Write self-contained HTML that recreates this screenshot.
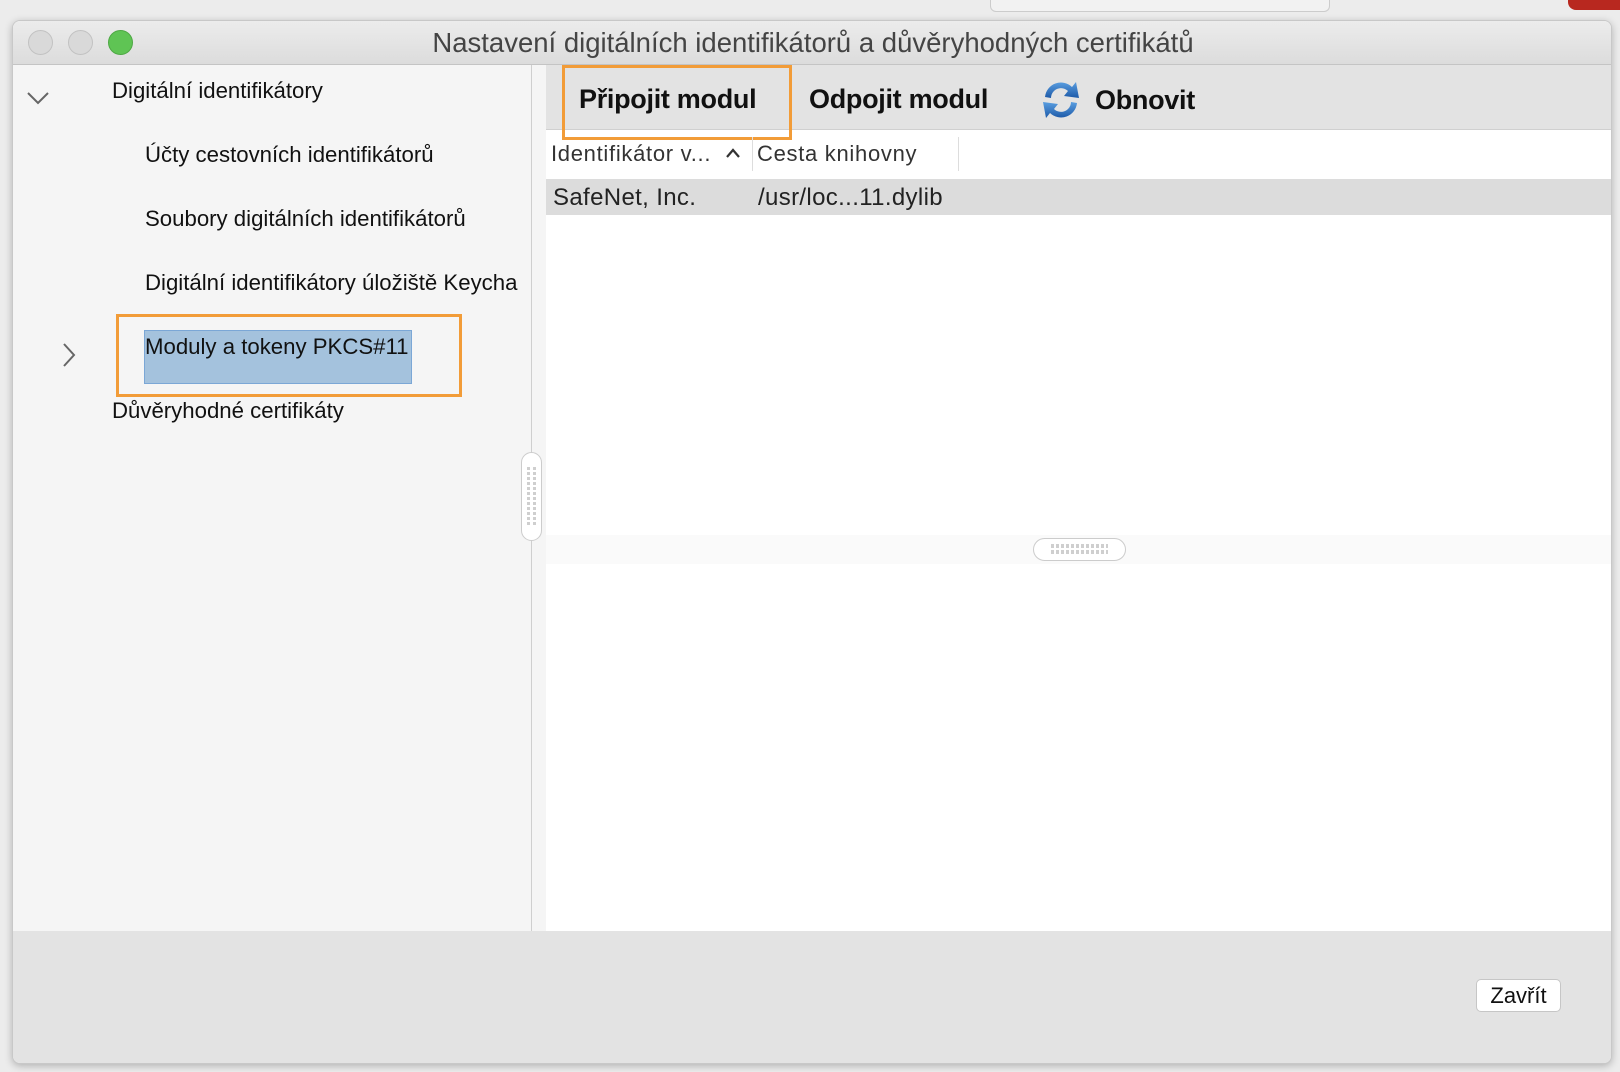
<!DOCTYPE html>
<html><head><meta charset="utf-8"><style>
*{margin:0;padding:0;box-sizing:border-box}
body{width:1620px;height:1072px;background:#ececec;position:relative;overflow:hidden;font-family:"Liberation Sans",sans-serif;color:#111}
.a{position:absolute}
.win{left:12px;top:20px;width:1600px;height:1044px;background:#f5f5f5;border:1px solid #c8c8c8;border-radius:8px;overflow:hidden;box-shadow:0 2px 8px rgba(0,0,0,.25)}
.tb{left:0;top:0;width:1600px;height:44px;background:linear-gradient(#ececec,#dcdcdc);border-bottom:1px solid #c4c4c4}
.dot{width:25px;height:25px;border-radius:50%;background:#d9d9d9;border:1px solid #c2c2c2;top:9px}
.t{font-size:27.5px;color:#444;white-space:nowrap}
.s{font-size:22.2px;white-space:nowrap}
.b{font-size:27px;font-weight:bold;white-space:nowrap;letter-spacing:-0.3px}
.h{font-size:22px;color:#333;letter-spacing:0.7px;white-space:nowrap}
.r{font-size:24px;color:#222;letter-spacing:0.35px;white-space:nowrap}
</style></head><body>
<div class="a" style="left:990px;top:0;width:340px;height:12px;border:1px solid #ccc;border-top:0;border-radius:0 0 6px 6px;background:#f2f2f2"></div>
<div class="a" style="left:1568px;top:0;width:52px;height:10px;background:#b8281f;border-radius:0 0 0 8px"></div>
<div class="a win">
 <div class="a tb">
  <div class="a dot" style="left:15px"></div>
  <div class="a dot" style="left:55px"></div>
  <div class="a dot" style="left:95px;background:#5fc454;border-color:#4ea844"></div>
  <div class="a t" style="left:0;width:1600px;text-align:center;top:6px">Nastavení digitálních identifikátorů a důvěryhodných certifikátů</div>
 </div>
 <div class="a" style="left:0;top:44px;width:519px;height:866px;background:#f5f5f5;border-right:1px solid #cfcfcf"></div>
 <svg class="a" style="left:12px;top:68px" width="26" height="18"><path d="M3 4 L13 14 L23 4" fill="none" stroke="#666" stroke-width="2"/></svg>
 <div class="a s" style="left:99px;top:57px">Digitální identifikátory</div>
 <div class="a s" style="left:132px;top:121px">Účty cestovních identifikátorů</div>
 <div class="a s" style="left:132px;top:185px">Soubory digitálních identifikátorů</div>
 <div class="a s" style="left:132px;top:249px">Digitální identifikátory úložiště Keycha</div>
 <div class="a" style="left:103px;top:293px;width:346px;height:83px;border:3px solid #f29c38"></div>
 <div class="a" style="left:131px;top:309px;width:268px;height:54px;background:#a4c2dd;border:1px solid #7ba7d6"></div>
 <div class="a s" style="left:132px;top:313px">Moduly a tokeny PKCS#11</div>
 <svg class="a" style="left:48px;top:320px" width="16" height="28"><path d="M3 3 L13 14 L3 25" fill="none" stroke="#666" stroke-width="2"/></svg>
 <div class="a s" style="left:99px;top:377px">Důvěryhodné certifikáty</div>
 <div class="a" style="left:508px;top:431px;width:21px;height:89px;border:1.5px solid #ccc;border-radius:11px;background:#fff"></div>
 <div class="a" style="left:514px;top:446px;width:9px;height:58px;background:repeating-linear-gradient(#cfcfcf 0 3px,transparent 3px 5px);-webkit-mask:repeating-linear-gradient(90deg,#000 0 3px,transparent 3px 6px)"></div>
 <div class="a" style="left:533px;top:44px;width:1067px;height:866px;background:#fff"></div>
 <div class="a" style="left:533px;top:44px;width:1067px;height:65px;background:#e3e3e3;border-bottom:1px solid #d0d0d0"></div>
 <div class="a" style="left:549px;top:44px;width:230px;height:75px;border:3px solid #f29c38"></div>
 <div class="a b" style="left:566px;top:63px">Připojit modul</div>
 <div class="a b" style="left:796px;top:63px">Odpojit modul</div>
 <svg class="a" style="left:1026px;top:56px" width="44" height="46" viewBox="0 0 44 46">
  <defs><linearGradient id="g" x1="0" y1="0" x2="0" y2="1"><stop offset="0" stop-color="#5a9ee0"/><stop offset="1" stop-color="#1d5aa8"/></linearGradient></defs>
  <path d="M6 20 A16 16 0 0 1 33 10 L37 5 L40 21 L25 19 L29 14 A10 10 0 0 0 12 21 Z" fill="url(#g)"/>
  <path d="M38 26 A16 16 0 0 1 11 36 L7 41 L4 25 L19 27 L15 32 A10 10 0 0 0 32 25 Z" fill="url(#g)"/>
 </svg>
 <div class="a b" style="left:1082px;top:64px">Obnovit</div>
 <div class="a h" style="left:538px;top:120px">Identifikátor v...</div>
 <svg class="a" style="left:712px;top:126px" width="16" height="12"><path d="M2 10 L8 3 L14 10" fill="none" stroke="#333" stroke-width="2.2"/></svg>
 <div class="a" style="left:739px;top:116px;width:1px;height:34px;background:#ddd"></div>
 <div class="a h" style="left:744px;top:120px">Cesta knihovny</div>
 <div class="a" style="left:945px;top:116px;width:1px;height:34px;background:#ddd"></div>
 <div class="a" style="left:533px;top:158px;width:1067px;height:36px;background:#dcdcdc"></div>
 <div class="a r" style="left:540px;top:163px">SafeNet, Inc.</div>
 <div class="a r" style="left:745px;top:163px">/usr/loc...11.dylib</div>
 <div class="a" style="left:533px;top:514px;width:1067px;height:29px;background:#fafafa"></div>
 <div class="a" style="left:1020px;top:517px;width:93px;height:23px;border:1.5px solid #ccc;border-radius:12px;background:#fff"></div>
 <div class="a" style="left:1038px;top:523px;width:57px;height:11px;background:repeating-linear-gradient(90deg,#cfcfcf 0 3px,transparent 3px 5px);-webkit-mask:repeating-linear-gradient(#000 0 4px,transparent 4px 6px)"></div>
 <div class="a" style="left:0;top:910px;width:1600px;height:134px;background:#e3e3e3"></div>
 <div class="a" style="left:1463px;top:958px;width:85px;height:33px;background:#fff;border:1px solid #c6c6c6;border-radius:5px;font-size:22px;text-align:center;line-height:31px">Zavřít</div>
</div>
</body></html>
